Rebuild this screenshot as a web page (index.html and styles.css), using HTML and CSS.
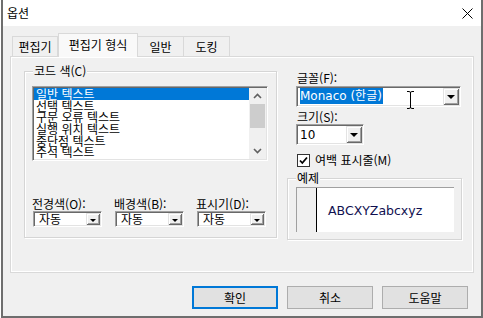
FILE: index.html
```html
<!DOCTYPE html>
<html lang="ko">
<head>
    <meta charset="UTF-8">
    <meta name="viewport" content="width=device-width, initial-scale=1.0">
    <title>옵션</title>
    <link rel="stylesheet" href="styles.css">
</head>
<body>
    <div class="window">
        <div class="titlebar">
            <span class="title">옵션</span>
            <svg class="close" width="11" height="11" viewBox="0 0 11 11">
                <path d="M0.5 0.5L10.5 10.5M10.5 0.5L0.5 10.5" stroke="#000" stroke-width="1" fill="none"/>
            </svg>
        </div>
        <div class="content">
            <div class="tabs">
                <div class="tab tab-editor">편집기</div>
                <div class="tab active">편집기 형식</div>
                <div class="tab">일반</div>
                <div class="tab">도킹</div>
            </div>
            <div class="panel">
                <div class="group code-colors">
                    <span class="group-label">코드 색(C)</span>
                    <div class="listbox">
                        <ul class="items">
                            <li class="selected">일반 텍스트</li>
                            <li>선택 텍스트</li>
                            <li>구문 오류 텍스트</li>
                            <li>실행 위치 텍스트</li>
                            <li>중단점 텍스트</li>
                            <li>주석 텍스트</li>
                        </ul>
                        <div class="scrollbar">
                            <div class="scroll-btn">
                                <svg width="9" height="6" viewBox="0 0 9 6"><path d="M1 5L4.5 1.5L8 5" stroke="#606060" stroke-width="1.6" fill="none"/></svg>
                            </div>
                            <div class="track"><div class="thumb"></div></div>
                            <div class="scroll-btn">
                                <svg width="9" height="6" viewBox="0 0 9 6"><path d="M1 1L4.5 4.5L8 1" stroke="#606060" stroke-width="1.6" fill="none"/></svg>
                            </div>
                        </div>
                    </div>
                    <div class="color-row">
                        <div class="color-field">
                            <label>전경색(O):</label>
                            <div class="combo small"><span class="value">자동</span><span class="drop"></span></div>
                        </div>
                        <div class="color-field">
                            <label>배경색(B):</label>
                            <div class="combo small"><span class="value">자동</span><span class="drop"></span></div>
                        </div>
                        <div class="color-field">
                            <label>표시기(D):</label>
                            <div class="combo small"><span class="value">자동</span><span class="drop"></span></div>
                        </div>
                    </div>
                </div>

                <div class="side">
                    <label class="field-label">글꼴(F):</label>
                    <div class="combo font-combo">
                        <span class="value"><span class="highlight">Monaco (한글)</span></span>
                        <span class="drop"></span>
                        <svg class="ibeam" width="9" height="18" viewBox="0 0 9 18">
                            <path d="M1 0.5H3.2Q4.5 0.5 4.5 2Q4.5 0.5 5.8 0.5H8M4.5 2V16M1 17.5H3.2Q4.5 17.5 4.5 16Q4.5 17.5 5.8 17.5H8" stroke="#000" stroke-width="1" fill="none"/>
                        </svg>
                    </div>
                    <label class="field-label size-label">크기(S):</label>
                    <div class="combo size-combo">
                        <span class="value">10</span>
                        <span class="drop"></span>
                    </div>
                    <div class="check-row">
                        <svg class="checkbox" width="13" height="13" viewBox="0 0 13 13">
                            <rect x="0.5" y="0.5" width="12" height="12" fill="#fff" stroke="#333"/>
                            <path d="M3 6.5L5.3 9L10 3.5" stroke="#000" stroke-width="1.8" fill="none"/>
                        </svg>
                        <span>여백 표시줄(M)</span>
                    </div>
                    <div class="group sample-group">
                        <span class="group-label">예제</span>
                        <div class="sample">
                            <div class="gutter"></div>
                            <div class="sample-text">ABCXYZabcxyz</div>
                        </div>
                    </div>
                </div>
            </div>
            <div class="buttons">
                <button class="default">확인</button>
                <button>취소</button>
                <button>도움말</button>
            </div>
        </div>
    </div>
</body>
</html>
```

FILE: styles.css
```css
* {
    box-sizing: border-box;
    margin: 0;
    padding: 0;
}

body {
    font-family: "Noto Sans CJK KR", sans-serif;
    font-size: 12px;
    color: #000;
    background-color: #fff;
}

.window {
    margin-left: 1px;
    width: 482px;
    height: 318px;
    border: 2px solid #6e6e6e;
    border-top: none;
    background-color: #f0f0f0;
    display: flex;
    flex-direction: column;
}

.titlebar {
    height: 26px;
    background-color: #fff;
    display: flex;
    align-items: center;
    justify-content: space-between;
    padding-left: 4px;
}

.title {
    font-size: 12px;
    line-height: 14px;
}

.close {
    margin-right: 8px;
}

.content {
    padding: 7px 7px 0 7px;
    display: flex;
    flex-direction: column;
}

/* tabs */
.tabs {
    display: flex;
    align-items: flex-end;
    height: 23px;
    margin-left: 2px;
}

.tab {
    height: 20px;
    width: 46px;
    border: 1px solid #d9d9d9;
    border-bottom: none;
    background-color: #f0f0f0;
    line-height: 19px;
    text-align: center;
}

.tab + .tab {
    border-left: none;
}

.tab.active {
    width: 80px;
    height: 24px;
    margin-bottom: -1px;
    line-height: 22px;
    background-color: #f9f9f9;
    border: 1px solid #d9d9d9;
    border-bottom: none;
    position: relative;
    z-index: 1;
}

.tab.active + .tab {
    border-left: none;
}

.panel {
    width: 464px;
    height: 217px;
    border: 1px solid #d9d9d9;
    box-shadow: inset 0 0 0 1px #fff;
    display: flex;
    align-items: flex-start;
    padding: 14px 0 0 13px;
}

/* group boxes */
.group {
    position: relative;
    border: 1px solid #d5d5d5;
    box-shadow: inset 1px 1px 0 #fff, 1px 1px 0 #fff;
}

.group-label {
    position: absolute;
    top: -8px;
    left: 8px;
    line-height: 14px;
    padding: 0 1px;
    background-color: #f0f0f0;
}

.code-colors {
    width: 253px;
    height: 167px;
    padding: 14px 0 0 7px;
}

/* sunken controls */
.listbox,
.combo {
    border-top: 1px solid #a0a0a0;
    border-left: 1px solid #a0a0a0;
    border-right: 1px solid #fff;
    border-bottom: 1px solid #fff;
    box-shadow: inset 1px 1px 0 #696969, inset -1px -1px 0 #e3e3e3;
    background-color: #fff;
    padding: 1px;
}

.listbox {
    width: 236px;
    height: 75px;
    display: flex;
}

.items {
    flex: 1;
    list-style: none;
}

.items li {
    line-height: 11.7px;
    height: 11.7px;
    padding-left: 2px;
    white-space: nowrap;
}

.items li.selected {
    background-color: #0078d7;
    color: #fff;
}

.scrollbar {
    width: 17px;
    background-color: #f0f0f0;
    display: flex;
    flex-direction: column;
}

.scroll-btn {
    height: 16px;
    display: flex;
    align-items: center;
    justify-content: center;
}

.track {
    flex: 1;
}

.thumb {
    height: 24px;
    margin: 0 1px;
    background-color: #cdcdcd;
}

.color-row {
    display: grid;
    grid-template-columns: repeat(3, 70px);
    column-gap: 12px;
    margin-top: 36px;
}

.color-field label {
    display: block;
    line-height: 14px;
}

.combo {
    position: relative;
    display: flex;
    align-items: center;
}

.combo .value {
    flex: 1;
    padding-left: 2px;
    white-space: nowrap;
}

.combo .drop {
    width: 16px;
    height: 100%;
    background-color: #f0f0f0;
    box-shadow: inset 1px 1px 0 #e3e3e3, inset -1px -1px 0 #696969, inset 2px 2px 0 #fff, inset -2px -2px 0 #a0a0a0;
    display: flex;
    align-items: center;
    justify-content: center;
}

.combo .drop::after {
    content: "";
    border-left: 4px solid transparent;
    border-right: 4px solid transparent;
    border-top: 4px solid #000;
}

.combo.small {
    width: 69px;
    height: 16px;
    margin-left: 1px;
}

.combo.small .value {
    padding-left: 4px;
    line-height: 12px;
}

.combo.small .drop {
    width: 14px;
}

.combo.small .drop::after {
    border-left-width: 3px;
    border-right-width: 3px;
    border-top-width: 3px;
    margin-top: 3px;
}

/* right column */
.side {
    width: 175px;
    margin-left: 10px;
    display: flex;
    flex-direction: column;
}

.field-label {
    line-height: 14px;
    padding-left: 10px;
}

.size-label {
    margin-top: 3px;
}

.font-combo {
    width: 165px;
    height: 21px;
    margin: 1px 0 0 9px;
    font-family: "DejaVu Sans", "Noto Sans CJK KR", sans-serif;
}

.size-combo {
    width: 68px;
    height: 21px;
    margin-left: 9px;
    font-family: "DejaVu Sans", "Noto Sans CJK KR", sans-serif;
}

.highlight {
    background-color: #0078d7;
    color: #fff;
    padding: 1px 1px 1px 0;
    line-height: 15px;
}

.ibeam {
    position: absolute;
    left: 109px;
    top: 4px;
}

.check-row {
    display: flex;
    align-items: center;
    height: 14px;
    margin: 8px 0 0 10px;
    gap: 5px;
    line-height: 14px;
}

.sample-group {
    width: 175px;
    height: 62px;
    margin-top: 11px;
    padding: 8px 0 0 8px;
}

.sample {
    width: 158px;
    height: 45px;
    display: flex;
    align-items: center;
    background-color: #fff;
    border-top: 1px solid #a0a0a0;
    border-left: 1px solid #a0a0a0;
}

.gutter {
    width: 20px;
    height: 100%;
    background-color: #f0f0f0;
    border-right: 1px solid #000;
}

.sample-text {
    padding-left: 11px;
    font-family: "DejaVu Sans", sans-serif;
    font-size: 12.5px;
    color: #101050;
}

/* dialog buttons */
.buttons {
    display: flex;
    justify-content: flex-end;
    gap: 9px;
    margin-top: 13px;
    padding-right: 6px;
}

button {
    width: 86px;
    height: 23px;
    background-color: #e1e1e1;
    border: 1px solid #adadad;
    font-family: "Noto Sans CJK KR", sans-serif;
    font-size: 12px;
    color: #000;
}

button.default {
    border: 2px solid #0078d7;
}
```
